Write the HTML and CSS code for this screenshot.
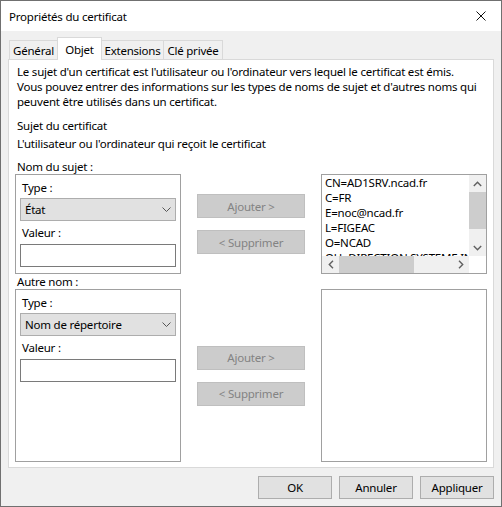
FILE: index.html
```html
<!DOCTYPE html>
<html lang="fr">
<head>
<meta charset="utf-8">
<title>Propriétés du certificat</title>
<link rel="stylesheet" href="styles.css">
</head>
<body>
<div class="window">
  <div class="titlebar">
    <span class="title">Propriétés du certificat</span>
    <svg class="close" width="10" height="10" viewBox="0 0 10 10"><path d="M0.5 0.5 L9.5 9.5 M9.5 0.5 L0.5 9.5" stroke="#111" stroke-width="1" fill="none"/></svg>
  </div>
  <div class="client">
    <div class="tabs">
      <div class="tab t-general">Général</div>
      <div class="tab active t-objet">Objet</div>
      <div class="tab t-ext">Extensions</div>
      <div class="tab t-cle">Clé privée</div>
    </div>
    <div class="panel">
      <p class="desc">Le sujet d'un certificat est l'utilisateur ou l'ordinateur vers lequel le certificat est émis.<br>Vous pouvez entrer des informations sur les types de noms de sujet et d'autres noms qui<br>peuvent être utilisés dans un certificat.</p>
      <p class="line subject-title">Sujet du certificat</p>
      <p class="line subject-sub">L'utilisateur ou l'ordinateur qui reçoit le certificat</p>
      <div class="area">
        <p class="line group-label">Nom du sujet :</p>
        <div class="row row1">
          <div class="frame">
            <div class="flabel">Type :</div>
            <div class="select"><span>État</span><svg width="9" height="5" viewBox="0 0 9 5"><path d="M0.5 0.5 L4.5 4.5 L8.5 0.5" stroke="#555" stroke-width="1" fill="none"/></svg></div>
            <div class="flabel v">Valeur :</div>
            <input class="input" type="text">
          </div>
          <div class="btncol">
            <button class="btn-dis" disabled>Ajouter &gt;</button>
            <button class="btn-dis" disabled>&lt; Supprimer</button>
          </div>
          <div class="listbox scroll">
            <div class="items">
              <div>CN=AD1SRV.ncad.fr</div>
              <div>C=FR</div>
              <div>E=noc@ncad.fr</div>
              <div>L=FIGEAC</div>
              <div>O=NCAD</div>
              <div>OU=DIRECTION SYSTEME INFORMATION</div>
            </div>
            <div class="vbar">
              <div class="arrow"><svg width="9" height="6" viewBox="0 0 9 6"><path d="M0.8 5 L4.5 1.3 L8.2 5" stroke="#606060" stroke-width="1.4" fill="none"/></svg></div>
              <div class="vtrack"><div class="vthumb"></div></div>
              <div class="arrow"><svg width="9" height="6" viewBox="0 0 9 6"><path d="M0.8 1 L4.5 4.7 L8.2 1" stroke="#606060" stroke-width="1.4" fill="none"/></svg></div>
            </div>
            <div class="hbar">
              <div class="arrow"><svg width="6" height="9" viewBox="0 0 6 9"><path d="M5 0.8 L1.3 4.5 L5 8.2" stroke="#606060" stroke-width="1.4" fill="none"/></svg></div>
              <div class="htrack"><div class="hthumb"></div></div>
              <div class="arrow"><svg width="6" height="9" viewBox="0 0 6 9"><path d="M1 0.8 L4.7 4.5 L1 8.2" stroke="#606060" stroke-width="1.4" fill="none"/></svg></div>
            </div>
            <div class="corner"></div>
          </div>
        </div>
        <p class="line group-label second">Autre nom :</p>
        <div class="row row2">
          <div class="frame">
            <div class="flabel">Type :</div>
            <div class="select"><span>Nom de répertoire</span><svg width="9" height="5" viewBox="0 0 9 5"><path d="M0.5 0.5 L4.5 4.5 L8.5 0.5" stroke="#555" stroke-width="1" fill="none"/></svg></div>
            <div class="flabel v">Valeur :</div>
            <input class="input" type="text">
          </div>
          <div class="btncol">
            <button class="btn-dis" disabled>Ajouter &gt;</button>
            <button class="btn-dis" disabled>&lt; Supprimer</button>
          </div>
          <div class="listbox"></div>
        </div>
      </div>
    </div>
    <div class="footer">
      <button class="btn">OK</button>
      <button class="btn">Annuler</button>
      <button class="btn">Appliquer</button>
    </div>
  </div>
</div>
</body>
</html>
```
FILE: styles.css
```css
* { box-sizing: border-box; }
html, body { margin: 0; padding: 0; }
body {
  width: 502px;
  height: 507px;
  overflow: hidden;
  font-family: "Noto Sans", "Open Sans", sans-serif;
  font-size: 11.5px;
  letter-spacing: -0.22px;
  color: #000;
  background: #f0f0f0;
}
button, input { font: inherit; letter-spacing: inherit; margin: 0; }

.window {
  width: 502px;
  height: 507px;
  border: 1px solid #707070;
  background: #f0f0f0;
  display: flex;
  flex-direction: column;
}
.titlebar {
  height: 30px;
  flex: none;
  background: #fff;
  display: flex;
  align-items: center;
  padding-left: 8px;
}
.title { flex: 1; line-height: 15px; }
.close { margin-right: 15px; }

.client {
  flex: 1;
  padding: 0 7px;
  display: flex;
  flex-direction: column;
}
.tabs {
  margin-top: 6px;
  height: 22px;
  flex: none;
  display: flex;
  align-items: flex-end;
  padding-left: 1px;
}
.tab {
  height: 19px;
  border: 1px solid #d9d9d9;
  border-bottom: none;
  background: #f0f0f0;
  display: flex;
  align-items: center;
  justify-content: center;
  line-height: 15px;
  white-space: nowrap;
}
.tab + .tab { margin-left: -1px; }
.tab.active {
  height: 23px;
  margin-bottom: -1px;
  background: #fff;
  position: relative;
  z-index: 1;
}
.t-general { width: 49px; }
.t-objet { width: 45px; }
.t-ext { width: 63px; }
.t-cle { width: 60px; }

.panel {
  height: 409px;
  flex: none;
  background: #fff;
  border: 1px solid #d9d9d9;
}
.desc {
  margin: 0;
  padding: 4px 0 0 8px;
  line-height: 15px;
  white-space: nowrap;
}
.line { margin: 0; line-height: 15px; white-space: nowrap; }
.subject-title { margin-top: 9px; padding-left: 8px; }
.subject-sub { margin-top: 3px; padding-left: 8px; }

.area { padding-left: 6px; }
.group-label { margin-top: 8px; padding-left: 2px; }
.group-label.second { margin-top: 0; }

.row { display: flex; gap: 16px; }
.row1 { height: 100px; }
.row2 { height: 173px; }

.frame {
  width: 166px;
  border: 1px solid #a0a0a0;
  padding: 5px 4px 0 4px;
}
.flabel { padding-left: 2px; line-height: 15px; }
.flabel.v { margin-top: 4px; }
.select {
  margin-top: 3px;
  height: 23px;
  background: #e1e1e1;
  border: 1px solid #adadad;
  display: flex;
  align-items: center;
  justify-content: space-between;
  padding: 0 4px;
  line-height: 15px;
}
.input {
  display: block;
  width: 100%;
  margin-top: 4px;
  height: 23px;
  border: 1px solid #7a7a7a;
  background: #fff;
  padding: 0 3px;
  outline: none;
}

.btncol {
  width: 108px;
  display: flex;
  flex-direction: column;
  justify-content: center;
  gap: 12px;
}
.btn-dis {
  height: 24px;
  padding: 0;
  background: #cccccc;
  border: 1px solid #bfbfbf;
  color: #838383;
  line-height: 15px;
}

.listbox {
  width: 166px;
  border: 1px solid #a0a0a0;
  background: #fff;
}
.listbox.scroll {
  display: grid;
  grid-template-columns: 1fr 17px;
  grid-template-rows: 1fr 17px;
}
.items {
  overflow: hidden;
  padding-left: 3px;
  line-height: 15px;
  white-space: nowrap;
}
.vbar {
  display: flex;
  flex-direction: column;
  background: #f0f0f0;
}
.arrow {
  width: 17px;
  height: 17px;
  flex: none;
  display: flex;
  align-items: center;
  justify-content: center;
}
.vtrack { flex: 1; }
.vthumb { height: 37px; background: #cdcdcd; }
.hbar { display: flex; background: #f0f0f0; }
.htrack { flex: 1; display: flex; }
.hthumb { width: 75px; background: #cdcdcd; }
.corner { background: #fff; }

.footer {
  margin-top: 8px;
  height: 23px;
  flex: none;
  display: flex;
  justify-content: flex-end;
  gap: 7px;
}
.btn {
  width: 74px;
  height: 23px;
  padding: 0;
  background: #e1e1e1;
  border: 1px solid #adadad;
  color: #000;
  line-height: 15px;
}
```
